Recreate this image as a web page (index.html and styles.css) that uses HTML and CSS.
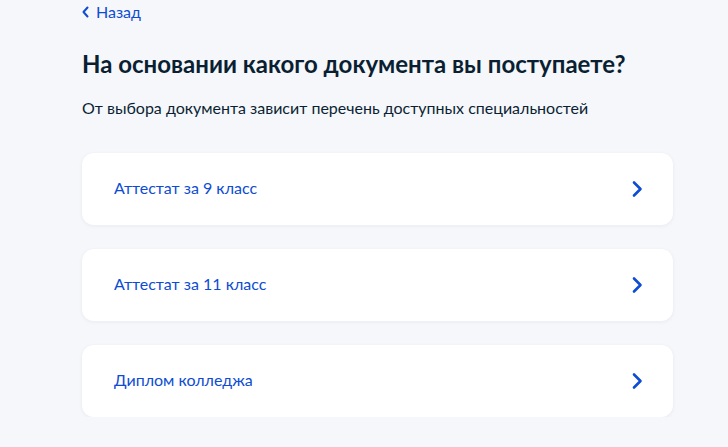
FILE: index.html
```html
<!DOCTYPE html>
<html>
  <head>
  <title>Выбор документа</title>
  <link rel="stylesheet" href="styles.css">
</head>
  <body>
    <div class="page">
      <a class="back" href="#">
        <svg class="back-icon" width="8" height="12" viewBox="0 0 8 12"><path d="M5.5 1.5L1.5 6l4 4.5" fill="none" stroke="#0d4cd3" stroke-width="2" stroke-linecap="round" stroke-linejoin="round"/></svg>
        Назад
      </a>
      <h1 class="title">На основании какого документа вы поступаете?</h1>
      <p class="subtitle">От выбора документа зависит перечень доступных специальностей</p>

      <ul class="doc-list">
        <li class="doc-item"><a href="#">Аттестат за 9 класс</a><svg class="arrow" width="12" height="18" viewBox="0 0 12 18"><path d="M3 2.5L9.5 9 3 15.5" fill="none" stroke="#0d4cd3" stroke-width="2.6" stroke-linecap="round" stroke-linejoin="round"/></svg></li>
        <li class="doc-item"><a href="#">Аттестат за 11 класс</a><svg class="arrow" width="12" height="18" viewBox="0 0 12 18"><path d="M3 2.5L9.5 9 3 15.5" fill="none" stroke="#0d4cd3" stroke-width="2.6" stroke-linecap="round" stroke-linejoin="round"/></svg></li>
        <li class="doc-item"><a href="#">Диплом колледжа</a><svg class="arrow" width="12" height="18" viewBox="0 0 12 18"><path d="M3 2.5L9.5 9 3 15.5" fill="none" stroke="#0d4cd3" stroke-width="2.6" stroke-linecap="round" stroke-linejoin="round"/></svg></li>
      </ul>
    </div>
  </body>
</html>
```

FILE: styles.css
```css
body{
  margin:0;
  background:#f5f7fb;
  font-family:Lato, "Noto Sans", sans-serif;
  color:#0b1f33;
}

.page{
  width:591px;
  margin-left:82px;
  padding-top:2px;
}

.back{
  display:flex;
  align-items:center;
  gap:6px;
  color:#0d4cd3;
  font-size:16px;
  line-height:20px;
  text-decoration:none;
}

.title{
  margin:26px 0 0;
  font-size:24px;
  line-height:32px;
  font-weight:700;
}

.subtitle{
  margin:16px 0 0;
  font-size:16px;
  line-height:24px;
}

.doc-list{
  list-style:none;
  margin:33px 0 0;
  padding:0;
  display:flex;
  flex-direction:column;
  gap:24px;
}

.doc-item{
  display:flex;
  align-items:center;
  justify-content:space-between;
  height:72px;
  padding:0 30px 0 32px;
  box-sizing:border-box;
  background:#fff;
  border-radius:12px;
  box-shadow:0 1px 4px rgba(11,31,51,0.06);
}

.doc-item a{
  margin-bottom:3px;
  color:#0d4cd3;
  font-size:16px;
  text-decoration:none;
}

.arrow{
  display:block;
}
```
